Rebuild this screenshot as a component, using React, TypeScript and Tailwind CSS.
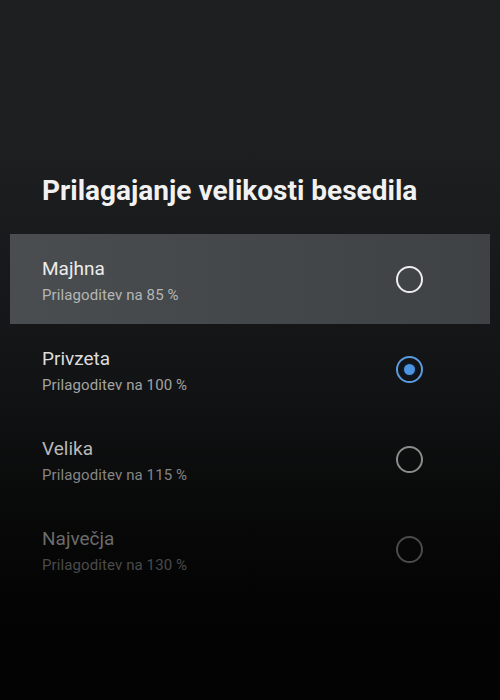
import React from 'react'

interface SizeOption {
  label: string
  hint: string
  labelColor: string
  hintColor: string
  ringColor: string
  selected?: boolean
  focused?: boolean
}

const options: SizeOption[] = [
  {
    label: 'Majhna',
    hint: 'Prilagoditev na 85 %',
    labelColor: 'text-[#ececec]',
    hintColor: 'text-[#b4b6b7]',
    ringColor: 'border-[#ededed]',
    focused: true,
  },
  {
    label: 'Privzeta',
    hint: 'Prilagoditev na 100 %',
    labelColor: 'text-[#dcdcdc]',
    hintColor: 'text-[#a3a3a3]',
    ringColor: 'border-[#5b9be0]',
    selected: true,
  },
  {
    label: 'Velika',
    hint: 'Prilagoditev na 115 %',
    labelColor: 'text-[#b9b9b9]',
    hintColor: 'text-[#858585]',
    ringColor: 'border-[#8c8c8c]',
  },
  {
    label: 'Največja',
    hint: 'Prilagoditev na 130 %',
    labelColor: 'text-[#6b6b6b]',
    hintColor: 'text-[#4a4a4a]',
    ringColor: 'border-[#4b4b4b]',
  },
]

const Radio: React.FC<{ ringColor: string; selected?: boolean }> = ({ ringColor, selected }) => (
  <div className={`w-[27px] h-[27px] rounded-full border-[2.5px] ${ringColor} flex items-center justify-center`}>
    {selected && <div className="w-[15px] h-[15px] rounded-full bg-[#4d95e0] border-2 border-[#0b1a2c]" />}
  </div>
)

const App: React.FC = () => {
  return (
    <div
      className="w-[500px] h-[700px] overflow-hidden bg-gradient-to-b from-[#1e1f21] from-20% via-[#121314] via-55% to-[#030303] to-90%"
      style={{ fontFamily: 'Roboto, "Noto Sans", sans-serif' }}
    >
      <h1 className="pt-[174px] px-[42px] text-[28px] leading-[34px] font-bold text-[#f1f1f1]">
        Prilagajanje velikosti besedila
      </h1>

      <div className="mt-[26px]">
        {options.map((opt) => (
          <div
            key={opt.label}
            className={`mx-[10px] h-[90px] pl-[32px] pr-[67px] flex justify-between items-center ${
              opt.focused ? 'bg-gradient-to-r from-[#4a4d4f] to-[#3f4244]' : ''
            }`}
          >
            <div className="pt-[3px]">
              <div className={`text-[19px] leading-[24px] ${opt.labelColor}`}>{opt.label}</div>
              <div className={`mt-[4px] text-[15px] leading-[20px] tracking-[0.1px] ${opt.hintColor}`}>
                {opt.hint}
              </div>
            </div>
            <Radio ringColor={opt.ringColor} selected={opt.selected} />
          </div>
        ))}
      </div>
    </div>
  )
}

export default App
